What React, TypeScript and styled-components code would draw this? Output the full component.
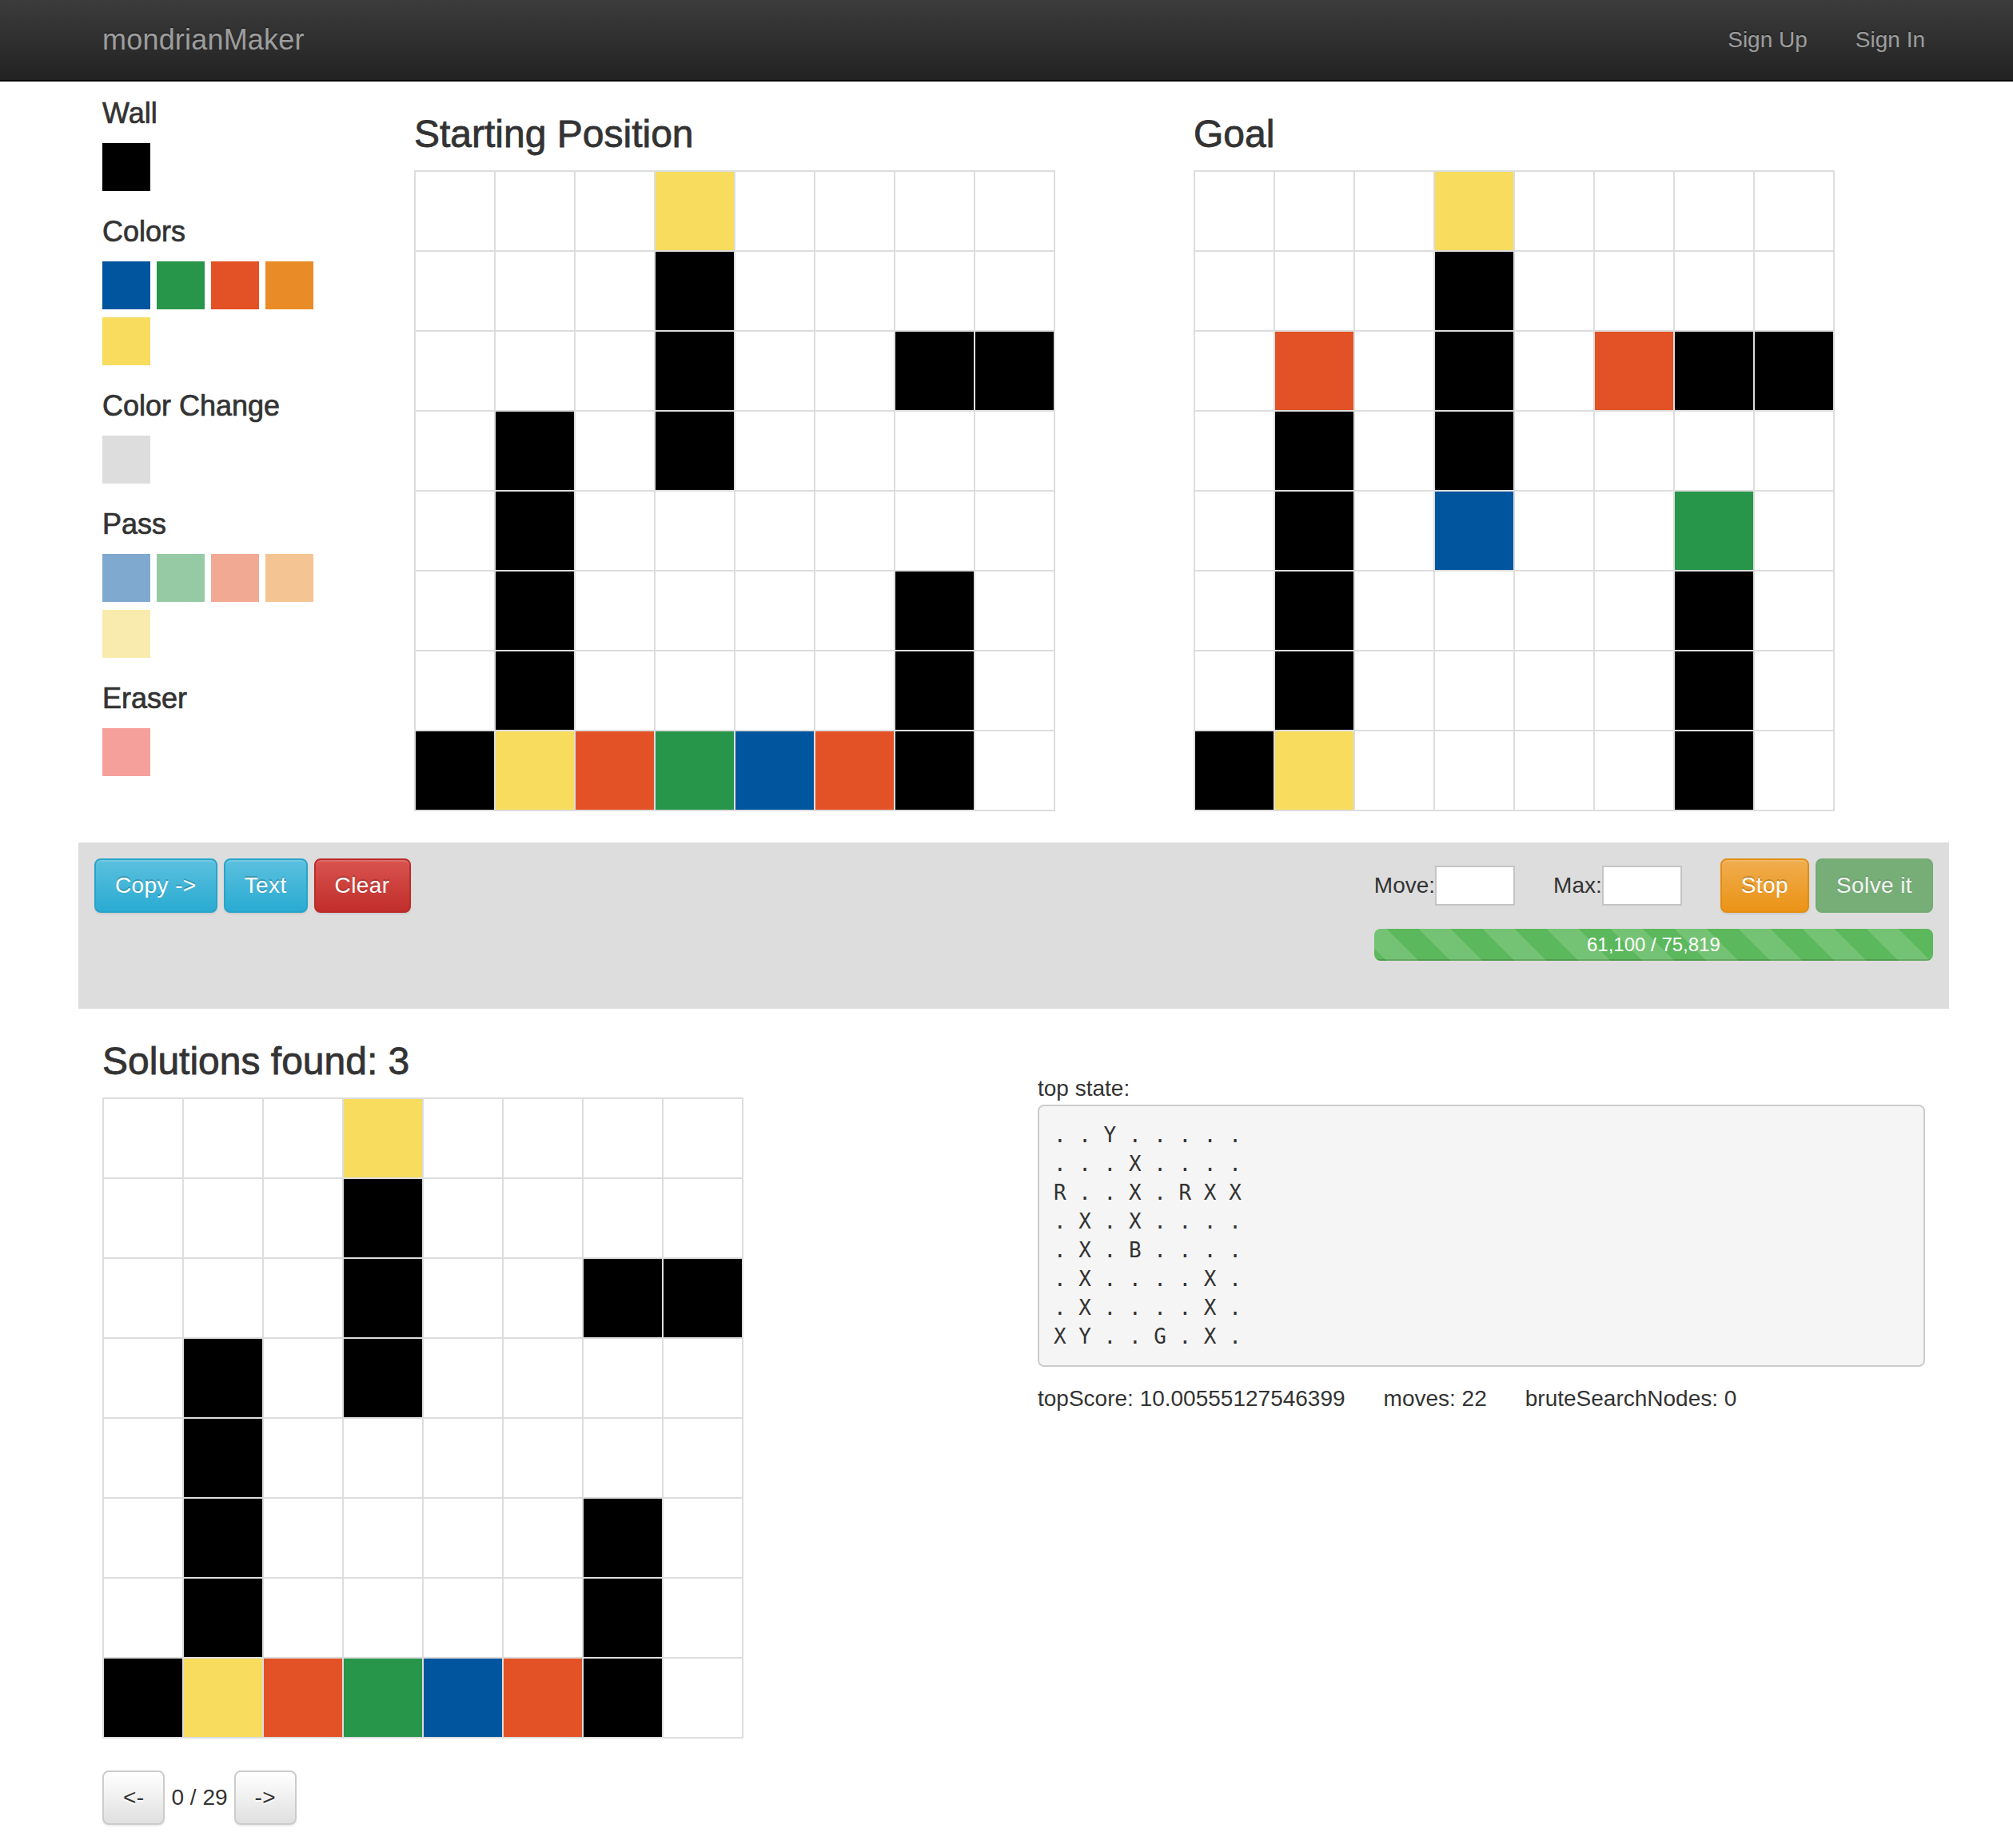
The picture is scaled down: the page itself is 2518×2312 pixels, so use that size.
import React from 'react';
import styled, { createGlobalStyle, css } from 'styled-components';

const GlobalStyle = createGlobalStyle`
  html, body { margin: 0; padding: 0; background: #fff; }
  body {
    font-family: "Liberation Sans", Arial, Helvetica, sans-serif;
    font-size: 28px;
    line-height: 40px;
    color: #333;
  }
  * { box-sizing: border-box; }
`;

const COLORS: Record<string, string> = {
  '.': '#ffffff',
  X: '#000000',
  Y: '#F7DC5E',
  R: '#E35226',
  G: '#28964A',
  B: '#00559F',
};

const startGrid = [
  '...Y....',
  '...X....',
  '...X..XX',
  '.X.X....',
  '.X......',
  '.X....X.',
  '.X....X.',
  'XYRGBRX.',
];

const goalGrid = [
  '...Y....',
  '...X....',
  '.R.X.RXX',
  '.X.X....',
  '.X.B..G.',
  '.X....X.',
  '.X....X.',
  'XY....X.',
];

const topState = [
  '. . Y . . . . .',
  '. . . X . . . .',
  'R . . X . R X X',
  '. X . X . . . .',
  '. X . B . . . .',
  '. X . . . . X .',
  '. X . . . . X .',
  'X Y . . G . X .',
].join('\n');

/* ---------- Navbar ---------- */
const Navbar = styled.nav`
  height: 102px;
  background: linear-gradient(to bottom, #3c3c3c 0%, #222222 100%);
  border-bottom: 2px solid #080808;
`;

const NavInner = styled.div`
  width: 2340px;
  margin-left: 98px;
  padding: 0 30px;
  height: 100px;
  display: flex;
  align-items: center;
  justify-content: space-between;
`;

const Brand = styled.a`
  font-size: 36px;
  line-height: 40px;
  color: #9d9d9d;
  text-decoration: none;
  letter-spacing: 0.2px;
  text-shadow: 0 -2px 0 rgba(0, 0, 0, 0.25);
`;

const NavLinks = styled.div`
  display: flex;
  gap: 60px;
`;

const NavLink = styled.a`
  font-size: 28px;
  line-height: 40px;
  color: #9d9d9d;
  text-decoration: none;
  text-shadow: 0 -2px 0 rgba(0, 0, 0, 0.25);
`;

/* ---------- Layout ---------- */
const Container = styled.div`
  width: 2340px;
  margin-left: 98px;
  padding: 0 30px;
`;

const Row = styled.div`
  display: flex;
  margin: 0 -30px;
`;

const Col = styled.div<{ $width: string }>`
  width: ${(p) => p.$width};
  padding: 0 30px;
  flex: none;
`;

const SideCol = styled(Col)`
  padding-top: 20px;
`;

const FullCol = styled(Col)`
  padding: 0;
`;

const SectionTitle = styled.h3`
  font-size: 48px;
  line-height: 52px;
  font-weight: 500;
  margin: 40px 0 19px;
  color: #333;
  -webkit-text-stroke: 0.8px #333;
`;

/* ---------- Palette ---------- */
const ToolLabel = styled.h4`
  font-size: 36px;
  line-height: 40px;
  font-weight: 500;
  margin: 0 0 17px;
  color: #333;
  -webkit-text-stroke: 0.7px #333;
`;

const Swatches = styled.div`
  display: flex;
  flex-wrap: wrap;
  column-gap: 8px;
  row-gap: 10px;
  margin-bottom: 31px;
`;

const Swatch = styled.div<{ $color: string }>`
  width: 60px;
  height: 60px;
  background: ${(p) => p.$color};
  cursor: pointer;
`;

/* ---------- Board ---------- */
const Board = styled.div`
  display: grid;
  grid-template-columns: repeat(8, 98px);
  grid-auto-rows: 98px;
  gap: 2px;
  padding: 2px;
  background: #dddddd;
  width: 802px;
`;

const Cell = styled.div<{ $color: string }>`
  background: ${(p) => p.$color};
`;

/* ---------- Buttons ---------- */
type Variant = 'info' | 'danger' | 'warning' | 'success' | 'default';

const variants: Record<Variant, ReturnType<typeof css>> = {
  info: css`
    background-image: linear-gradient(to bottom, #5bc0de 0%, #2aabd2 100%);
    border-color: #28a4c9;
  `,
  danger: css`
    background-image: linear-gradient(to bottom, #d9534f 0%, #c12e2a 100%);
    border-color: #b92c28;
  `,
  warning: css`
    background-image: linear-gradient(to bottom, #f0ad4e 0%, #eb9316 100%);
    border-color: #e38d13;
  `,
  success: css`
    background-image: linear-gradient(to bottom, #5cb85c 0%, #419641 100%);
    border-color: #3e8f3e;
  `,
  default: css`
    background-image: linear-gradient(to bottom, #ffffff 0%, #e0e0e0 100%);
    border-color: #cccccc;
    color: #333;
    text-shadow: 0 2px 0 #fff;
  `,
};

const Btn = styled.button<{ $variant: Variant }>`
  font-family: inherit;
  font-size: 28px;
  line-height: 40px;
  padding: 12px 24px;
  border: 2px solid transparent;
  border-radius: 8px;
  color: #fff;
  cursor: pointer;
  white-space: nowrap;
  letter-spacing: 0.4px;
  text-shadow: 0 -2px 0 rgba(0, 0, 0, 0.2);
  box-shadow: inset 0 2px 0 rgba(255, 255, 255, 0.15), 0 2px 2px rgba(0, 0, 0, 0.075);
  ${(p) => variants[p.$variant]}

  &:disabled {
    opacity: 0.65;
    background-image: none;
    background-color: #419641;
    box-shadow: none;
    cursor: not-allowed;
  }
`;

/* ---------- Control panel ---------- */
const Panel = styled.div`
  margin-top: 39px;
  background: #dddddd;
  padding: 20px;
  display: flex;
  justify-content: space-between;
  align-items: flex-start;
`;

const ButtonGroup = styled.div`
  display: flex;
  gap: 8px;
`;

const SolverBox = styled.div`
  display: flex;
  flex-direction: column;
  margin-bottom: 40px;
`;

const Controls = styled.div`
  display: flex;
  align-items: center;
`;

const Field = styled.label`
  display: flex;
  align-items: center;
  font-size: 28px;
  margin-right: 48px;
`;

const NumInput = styled.input`
  width: 100px;
  height: 50px;
  border: 2px solid #c4c4c4;
  background: #fff;
  font-family: inherit;
  font-size: 26px;
  padding: 2px 4px;
`;

const ActionButtons = styled.div`
  display: flex;
  gap: 8px;
`;

const Progress = styled.div`
  margin-top: 20px;
  height: 40px;
  border-radius: 8px;
  overflow: hidden;
  background-image: linear-gradient(to bottom, #ebebeb 0%, #f5f5f5 100%);
  box-shadow: inset 0 2px 4px rgba(0, 0, 0, 0.1);
`;

const ProgressBar = styled.div`
  height: 100%;
  background-color: #5cb85c;
  background-image: linear-gradient(
    45deg,
    rgba(255, 255, 255, 0.15) 25%,
    transparent 25%,
    transparent 50%,
    rgba(255, 255, 255, 0.15) 50%,
    rgba(255, 255, 255, 0.15) 75%,
    transparent 75%,
    transparent
  );
  background-size: 80px 80px;
  background-position: -24px 0;
  box-shadow: inset 0 -2px 0 rgba(0, 0, 0, 0.15);
  color: #fff;
  font-size: 24px;
  line-height: 40px;
  text-align: center;
`;

/* ---------- Solutions ---------- */
const Pager = styled.div`
  display: flex;
  align-items: center;
  gap: 8px;
  margin-top: 40px;
  margin-bottom: 20px;
`;

const PageCount = styled.span`
  font-size: 28px;
`;

const StateCol = styled(Col)`
  padding-top: 80px;
`;

const StateLabel = styled.div`
  font-size: 28px;
  line-height: 40px;
`;

const StateBox = styled.pre`
  margin: 0 0 20px;
  padding: 18px;
  font-family: "DejaVu Sans Mono", Menlo, Consolas, monospace;
  font-size: 26px;
  line-height: 36px;
  color: #333;
  background: #f5f5f5;
  border: 2px solid #cccccc;
  border-radius: 8px;
  white-space: pre;
`;

const Stats = styled.div`
  display: flex;
  gap: 48px;
  font-size: 28px;
  line-height: 40px;
`;

const palette = {
  wall: ['#000000'],
  colors: ['#00559F', '#28964A', '#E35226', '#E98B26', '#F7DC5E'],
  change: ['#DDDDDD'],
  pass: ['#7FA9CF', '#95CAA4', '#F1A994', '#F4C493', '#F9EBAE'],
  eraser: ['#F6A09C'],
};

const GridBoard: React.FC<{ rows: string[] }> = ({ rows }) => (
  <Board>
    {rows.flatMap((r, ri) =>
      r.split('').map((c, ci) => <Cell key={`${ri}-${ci}`} $color={COLORS[c]} />)
    )}
  </Board>
);

const Tool: React.FC<{ label: string; colors: string[] }> = ({ label, colors }) => (
  <>
    <ToolLabel>{label}</ToolLabel>
    <Swatches>
      {colors.map((c) => (
        <Swatch key={c} $color={c} />
      ))}
    </Swatches>
  </>
);

export default function App() {
  return (
    <>
      <GlobalStyle />
      <Navbar>
        <NavInner>
          <Brand href="#">mondrianMaker</Brand>
          <NavLinks>
            <NavLink href="#">Sign Up</NavLink>
            <NavLink href="#">Sign In</NavLink>
          </NavLinks>
        </NavInner>
      </Navbar>
      <Container>
        <Row>
          <SideCol $width="16.6667%">
            <Tool label="Wall" colors={palette.wall} />
            <Tool label="Colors" colors={palette.colors} />
            <Tool label="Color Change" colors={palette.change} />
            <Tool label="Pass" colors={palette.pass} />
            <Tool label="Eraser" colors={palette.eraser} />
          </SideCol>
          <Col $width="41.6667%">
            <SectionTitle>Starting Position</SectionTitle>
            <GridBoard rows={startGrid} />
          </Col>
          <Col $width="41.6667%">
            <SectionTitle>Goal</SectionTitle>
            <GridBoard rows={goalGrid} />
          </Col>
        </Row>

        <Row>
          <FullCol $width="100%">
            <Panel>
              <ButtonGroup>
                <Btn $variant="info">Copy -&gt;</Btn>
                <Btn $variant="info">Text</Btn>
                <Btn $variant="danger">Clear</Btn>
              </ButtonGroup>
              <SolverBox>
                <Controls>
                  <Field>
                    Move:
                    <NumInput type="text" />
                  </Field>
                  <Field>
                    Max:
                    <NumInput type="text" />
                  </Field>
                  <ActionButtons>
                    <Btn $variant="warning">Stop</Btn>
                    <Btn $variant="success" disabled>
                      Solve it
                    </Btn>
                  </ActionButtons>
                </Controls>
                <Progress>
                  <ProgressBar>61,100 / 75,819</ProgressBar>
                </Progress>
              </SolverBox>
            </Panel>
          </FullCol>
        </Row>

        <Row>
          <Col $width="50%">
            <SectionTitle>Solutions found: 3</SectionTitle>
            <GridBoard rows={startGrid} />
            <Pager>
              <Btn $variant="default">&lt;-</Btn>
              <PageCount>0 / 29</PageCount>
              <Btn $variant="default">-&gt;</Btn>
            </Pager>
          </Col>
          <StateCol $width="50%">
            <StateLabel>top state:</StateLabel>
            <StateBox>{topState}</StateBox>
            <Stats>
              <span>topScore: 10.00555127546399</span>
              <span>moves: 22</span>
              <span>bruteSearchNodes: 0</span>
            </Stats>
          </StateCol>
        </Row>
      </Container>
    </>
  );
}
